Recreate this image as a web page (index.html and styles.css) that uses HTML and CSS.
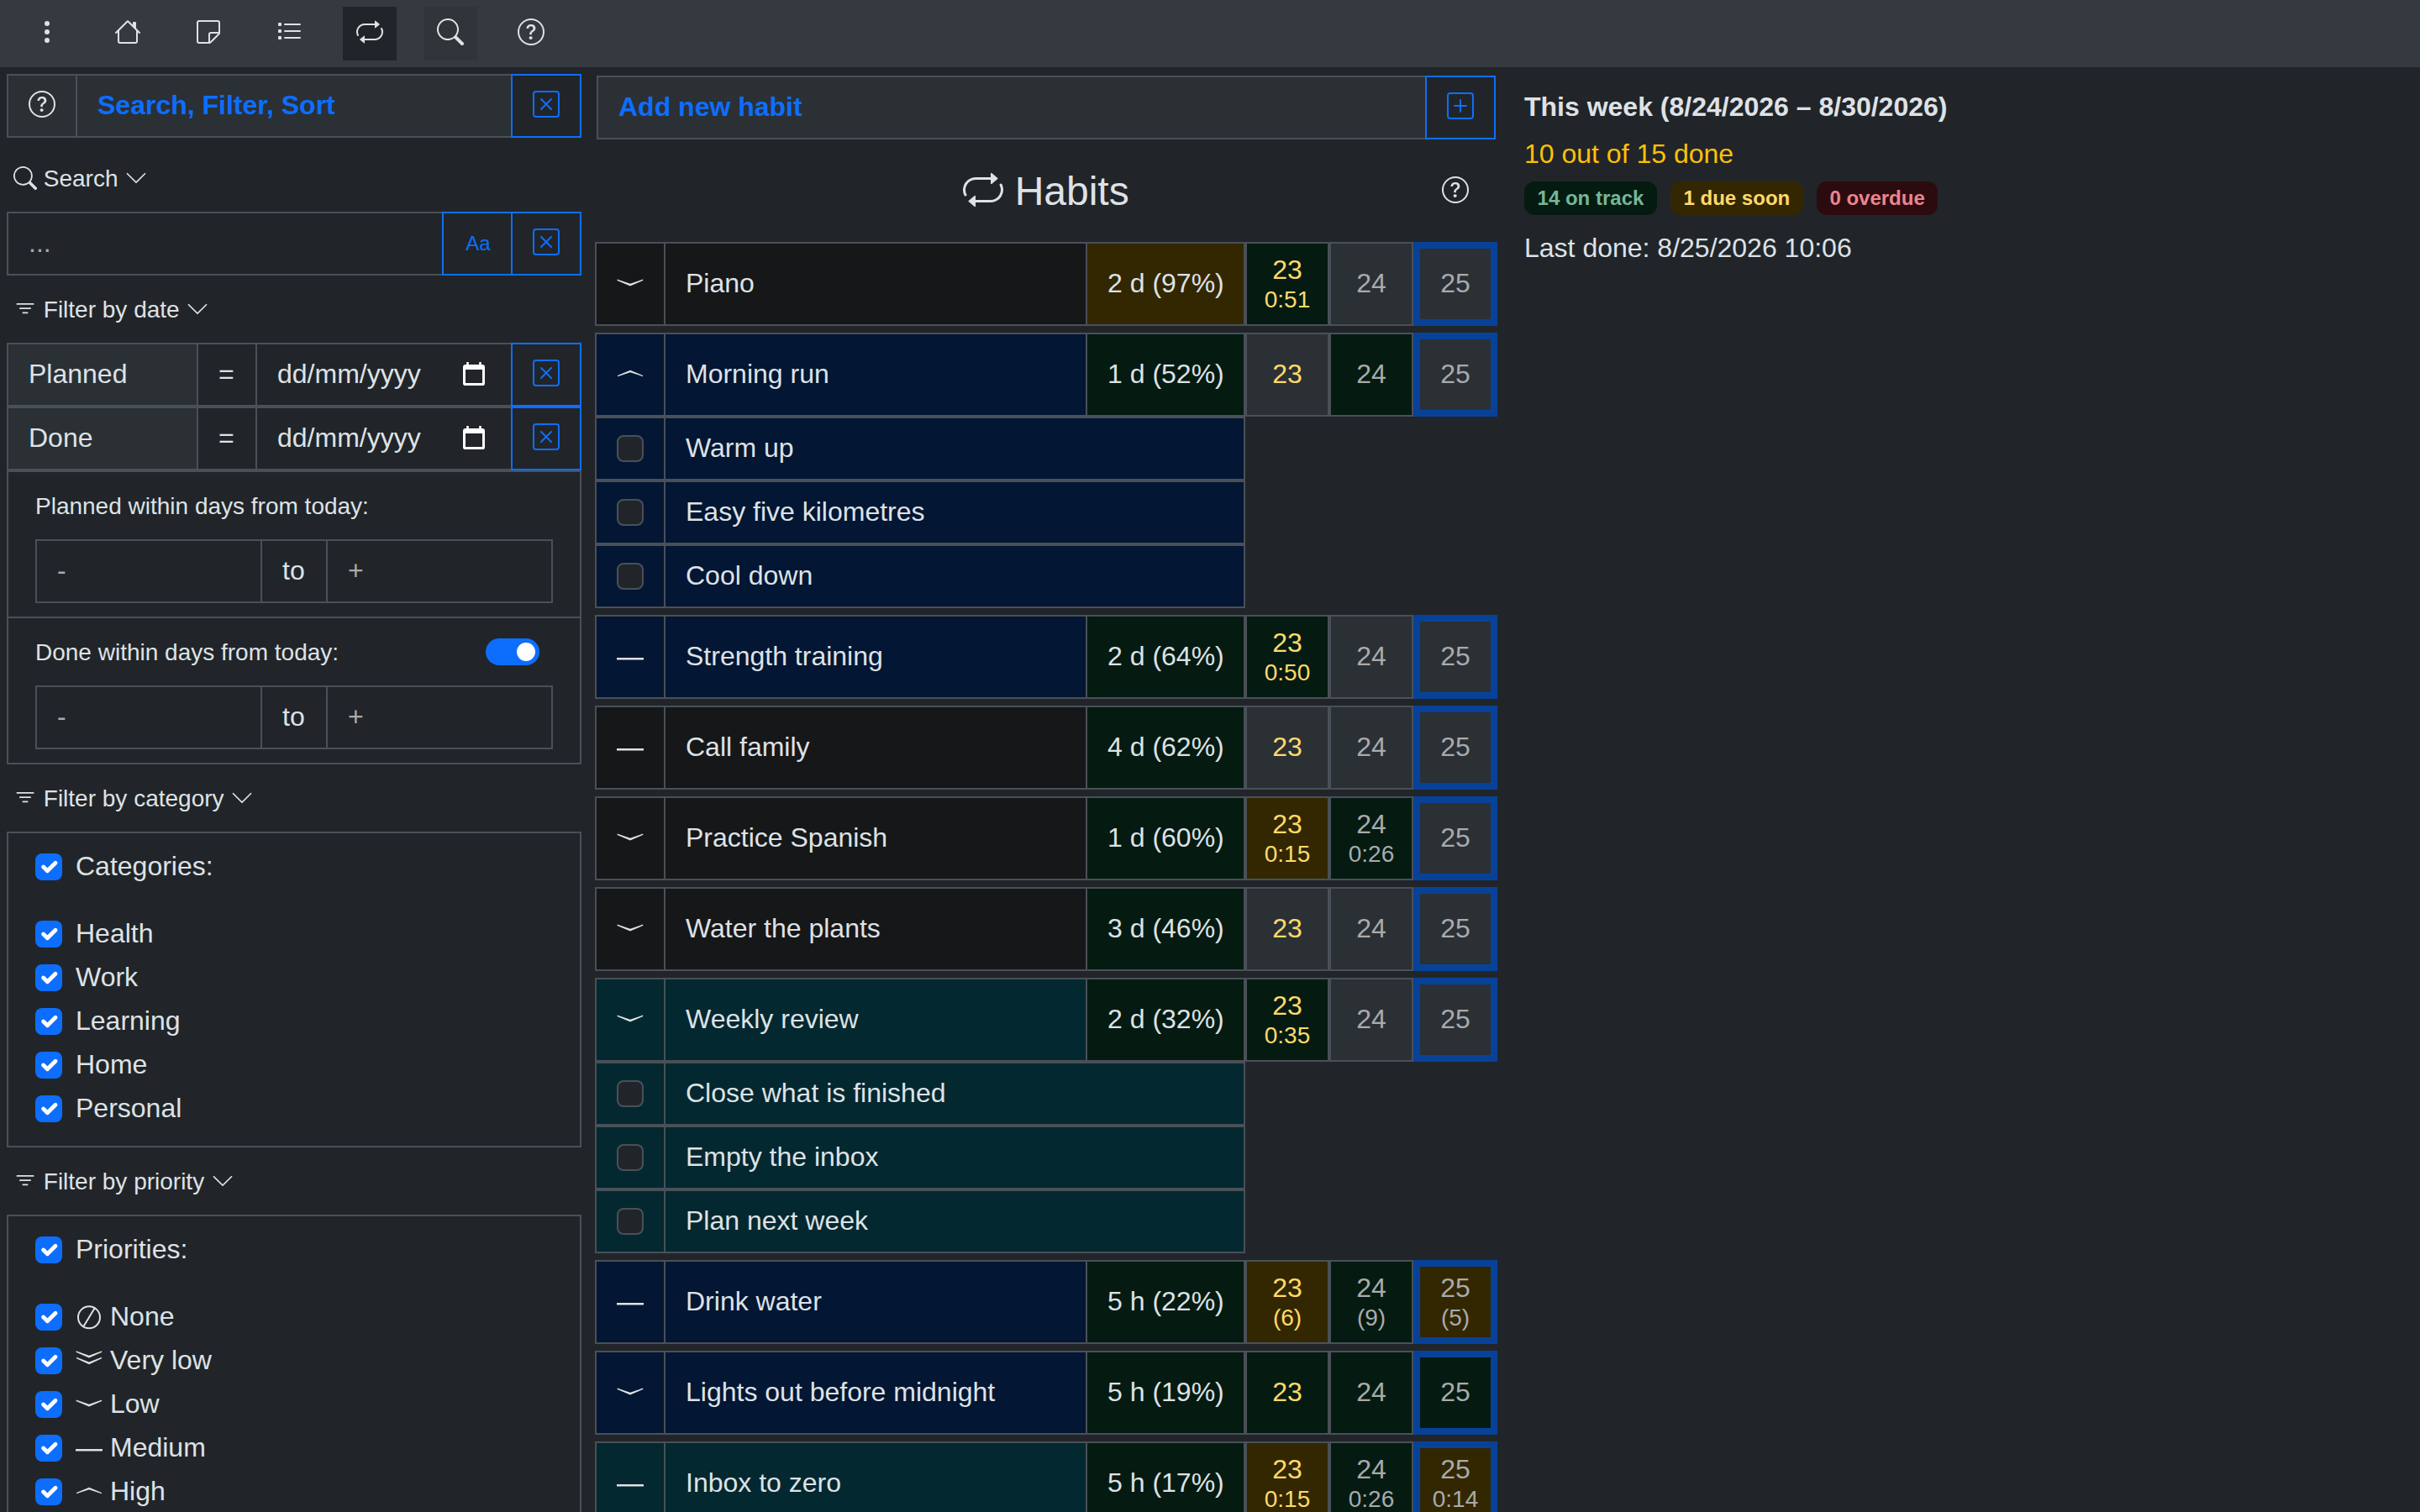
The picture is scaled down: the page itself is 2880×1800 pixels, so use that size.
FILE: index.html
```html
<!DOCTYPE html>
<html lang="en">
<head>
<meta charset="utf-8">
<title>Habits</title>
<link rel="stylesheet" href="styles.css">
</head>
<body>
<svg class="sprite" aria-hidden="true">
  <symbol id="dots" viewBox="0 0 16 16"><path d="M9.5 13a1.5 1.5 0 1 1-3 0 1.5 1.5 0 0 1 3 0m0-5a1.5 1.5 0 1 1-3 0 1.5 1.5 0 0 1 3 0m0-5a1.5 1.5 0 1 1-3 0 1.5 1.5 0 0 1 3 0"/></symbol>
  <symbol id="house" viewBox="0 0 16 16"><path d="M8.707 1.5a1 1 0 0 0-1.414 0L.646 8.146a.5.5 0 0 0 .708.708L2 8.207V13.5A1.5 1.5 0 0 0 3.5 15h9a1.5 1.5 0 0 0 1.5-1.5V8.207l.646.647a.5.5 0 0 0 .708-.708L13 5.793V2.5a.5.5 0 0 0-.5-.5h-1a.5.5 0 0 0-.5.5v1.293zM13 7.207V13.5a.5.5 0 0 1-.5.5h-9a.5.5 0 0 1-.5-.5V7.207l5-5z"/></symbol>
  <symbol id="sticky" viewBox="0 0 16 16"><path d="M2.5 1A1.5 1.5 0 0 0 1 2.5v11A1.5 1.5 0 0 0 2.5 15h6.086a1.5 1.5 0 0 0 1.06-.44l4.915-4.914A1.5 1.5 0 0 0 15 8.586V2.5A1.5 1.5 0 0 0 13.5 1zM2 2.5a.5.5 0 0 1 .5-.5h11a.5.5 0 0 1 .5.5V8H9.5A1.5 1.5 0 0 0 8 9.5V14H2.5a.5.5 0 0 1-.5-.5zm7 11.293V9.5a.5.5 0 0 1 .5-.5h4.293z"/></symbol>
  <symbol id="list" viewBox="0 0 16 16"><path d="M5 3.5a.5.5 0 0 1 .5-.5h9a.5.5 0 0 1 0 1h-9a.5.5 0 0 1-.5-.5M5.5 7a.5.5 0 0 0 0 1h9a.5.5 0 0 0 0-1zm0 4a.5.5 0 0 0 0 1h9a.5.5 0 0 0 0-1z"/><path d="M2 2.5h1a.5.5 0 0 1 .5.5v1a.5.5 0 0 1-.5.5H2a.5.5 0 0 1-.5-.5V3a.5.5 0 0 1 .5-.5M2 6.5h1a.5.5 0 0 1 .5.5v1a.5.5 0 0 1-.5.5H2a.5.5 0 0 1-.5-.5V7a.5.5 0 0 1 .5-.5M2 10.5h1a.5.5 0 0 1 .5.5v1a.5.5 0 0 1-.5.5H2a.5.5 0 0 1-.5-.5v-1a.5.5 0 0 1 .5-.5"/></symbol>
  <symbol id="repeat" viewBox="0 0 16 16"><path d="M11 5.466V4H5a4 4 0 0 0-3.584 5.777.5.5 0 1 1-.896.446A5 5 0 0 1 5 3h6V1.534a.25.25 0 0 1 .41-.192l2.36 1.966c.12.1.12.284 0 .384l-2.36 1.966a.25.25 0 0 1-.41-.192m3.81.086a.5.5 0 0 1 .67.225A5 5 0 0 1 11 13H5v1.466a.25.25 0 0 1-.41.192l-2.36-1.966a.25.25 0 0 1 0-.384l2.36-1.966a.25.25 0 0 1 .41.192V12h6a4 4 0 0 0 3.585-5.777.5.5 0 0 1 .225-.67Z"/></symbol>
  <symbol id="search" viewBox="0 0 16 16"><path d="M11.742 10.344a6.5 6.5 0 1 0-1.397 1.398h-.001q.044.06.098.115l3.85 3.85a1 1 0 0 0 1.415-1.414l-3.85-3.85a1 1 0 0 0-.115-.1zM12 6.5a5.5 5.5 0 1 1-11 0 5.5 5.5 0 0 1 11 0"/></symbol>
  <symbol id="help" viewBox="0 0 16 16"><path d="M8 15A7 7 0 1 1 8 1a7 7 0 0 1 0 14m0 1A8 8 0 1 0 8 0a8 8 0 0 0 0 16"/><path d="M5.255 5.786a.237.237 0 0 0 .241.247h.825c.138 0 .248-.113.266-.25.09-.656.54-1.134 1.342-1.134.686 0 1.314.343 1.314 1.168 0 .635-.374.927-.965 1.371-.673.489-1.206 1.06-1.168 1.987l.003.217a.25.25 0 0 0 .25.246h.811a.25.25 0 0 0 .25-.25v-.105c0-.718.273-.927 1.01-1.486.609-.463 1.244-.977 1.244-2.056 0-1.511-1.276-2.241-2.673-2.241-1.267 0-2.655.59-2.75 2.286m1.557 5.763c0 .533.425.927 1.01.927.609 0 1.028-.394 1.028-.927 0-.552-.42-.94-1.029-.94-.584 0-1.009.388-1.009.94"/></symbol>
  <symbol id="xsquare" viewBox="0 0 16 16"><path d="M14 1a1 1 0 0 1 1 1v12a1 1 0 0 1-1 1H2a1 1 0 0 1-1-1V2a1 1 0 0 1 1-1zM2 0a2 2 0 0 0-2 2v12a2 2 0 0 0 2 2h12a2 2 0 0 0 2-2V2a2 2 0 0 0-2-2z"/><path d="M4.646 4.646a.5.5 0 0 1 .708 0L8 7.293l2.646-2.647a.5.5 0 0 1 .708.708L8.707 8l2.647 2.646a.5.5 0 0 1-.708.708L8 8.707l-2.646 2.647a.5.5 0 0 1-.708-.708L7.293 8 4.646 5.354a.5.5 0 0 1 0-.708"/></symbol>
  <symbol id="plussquare" viewBox="0 0 16 16"><path d="M14 1a1 1 0 0 1 1 1v12a1 1 0 0 1-1 1H2a1 1 0 0 1-1-1V2a1 1 0 0 1 1-1zM2 0a2 2 0 0 0-2 2v12a2 2 0 0 0 2 2h12a2 2 0 0 0 2-2V2a2 2 0 0 0-2-2z"/><path d="M8 4a.5.5 0 0 1 .5.5v3h3a.5.5 0 0 1 0 1h-3v3a.5.5 0 0 1-1 0v-3h-3a.5.5 0 0 1 0-1h3v-3A.5.5 0 0 1 8 4"/></symbol>
  <symbol id="chevron" viewBox="0 0 16 16"><path d="M1.646 4.646a.5.5 0 0 1 .708 0L8 10.293l5.646-5.647a.5.5 0 0 1 .708.708l-6 6a.5.5 0 0 1-.708 0l-6-6a.5.5 0 0 1 0-.708"/></symbol>
  <symbol id="filter" viewBox="0 0 16 16"><path d="M6 10.5a.5.5 0 0 1 .5-.5h3a.5.5 0 0 1 0 1h-3a.5.5 0 0 1-.5-.5m-2-3a.5.5 0 0 1 .5-.5h7a.5.5 0 0 1 0 1h-7a.5.5 0 0 1-.5-.5m-2-3a.5.5 0 0 1 .5-.5h11a.5.5 0 0 1 0 1h-11a.5.5 0 0 1-.5-.5"/></symbol>
  <symbol id="calendar" viewBox="0 0 26 28"><path fill-rule="evenodd" d="M4.2 0h2.6v3h12.4V0h2.6v3H23a3 3 0 0 1 3 3v19.300a3 3 0 0 1-3 3H3a3 3 0 0 1-3-3V6a3 3 0 0 1 3-3h1.200zM3 9v16h20V9z"/></symbol>
  <symbol id="tick" viewBox="0 0 20 20"><path fill="none" stroke="#fff" stroke-linecap="round" stroke-linejoin="round" stroke-width="3" d="m6 10 3 3 6-6"/></symbol>
  <symbol id="none" viewBox="0 0 32 32"><path fill="none" stroke="currentColor" stroke-width="2" d="M29 16.300a13 13 0 1 1-26 0a13 13 0 1 1 26 0M9.300 27.300 22.700 5.300"/></symbol>
  <symbol id="verylow" viewBox="0 0 32 32"><path d="M.6 4.300 16 9.700 31.200 4.300v1.500L16 12.500.6 5.800zM1 11.800l15 5.600L31 11.800v1.500l-15 7-15-7z"/></symbol>
  <symbol id="low" viewBox="0 0 32 32"><path d="M.6 10.500 16 15.700 31.200 10.500v1.400L16 18.400.6 11.900z"/></symbol>
  <symbol id="medium" viewBox="0 0 32 32"><path d="M-.5 17h33v2.400h-33z"/></symbol>
  <symbol id="high" viewBox="0 0 32 32"><path d="M1 18.200 16 13.200l15 5V16.900L16 10.700 1 16.900z"/></symbol>
</svg>

<nav class="toolbar">
  <a class="tool"><svg class="icon"><use href="#dots"/></svg></a>
  <a class="tool"><svg class="icon"><use href="#house"/></svg></a>
  <a class="tool"><svg class="icon"><use href="#sticky"/></svg></a>
  <a class="tool"><svg class="icon"><use href="#list"/></svg></a>
  <a class="tool tool-active"><svg class="icon"><use href="#repeat"/></svg></a>
  <a class="tool tool-on"><svg class="icon"><use href="#search"/></svg></a>
  <a class="tool"><svg class="icon"><use href="#help"/></svg></a>
</nav>

<div class="layout">
  <aside class="sidebar">
    <div class="group">
      <div class="cell square raised"><svg class="icon"><use href="#help"/></svg></div>
      <div class="cell grow raised title">Search, Filter, Sort</div>
      <div class="cell square primary"><svg class="icon"><use href="#xsquare"/></svg></div>
    </div>

    <h3 class="section first"><svg class="icon-sm"><use href="#search"/></svg> Search <svg class="icon-sm"><use href="#chevron"/></svg></h3>
    <div class="group">
      <div class="cell grow muted">...</div>
      <div class="cell square primary case">Aa</div>
      <div class="cell square primary"><svg class="icon"><use href="#xsquare"/></svg></div>
    </div>

    <h3 class="section"><svg class="icon-sm"><use href="#filter"/></svg> Filter by date <svg class="icon-sm"><use href="#chevron"/></svg></h3>
    <div class="group">
      <div class="cell label raised">Planned</div>
      <div class="cell op">=</div>
      <div class="cell grow date">dd/mm/yyyy <svg class="calendar"><use href="#calendar"/></svg></div>
      <div class="cell square primary"><svg class="icon"><use href="#xsquare"/></svg></div>
    </div>
    <div class="group">
      <div class="cell label raised">Done</div>
      <div class="cell op">=</div>
      <div class="cell grow date">dd/mm/yyyy <svg class="calendar"><use href="#calendar"/></svg></div>
      <div class="cell square primary"><svg class="icon"><use href="#xsquare"/></svg></div>
    </div>
    <div class="box">
      <div class="range">
        <div class="range-head"><span>Planned within days from today:</span></div>
        <div class="group">
          <div class="cell from muted">-</div>
          <div class="cell to">to</div>
          <div class="cell grow muted">+</div>
        </div>
      </div>
      <div class="range">
        <div class="range-head"><span>Done within days from today:</span><span class="switch"></span></div>
        <div class="group">
          <div class="cell from muted">-</div>
          <div class="cell to">to</div>
          <div class="cell grow muted">+</div>
        </div>
      </div>
    </div>

    <h3 class="section"><svg class="icon-sm"><use href="#filter"/></svg> Filter by category <svg class="icon-sm"><use href="#chevron"/></svg></h3>
    <div class="box checks">
      <label class="check check-all"><svg class="tick"><use href="#tick"/></svg>Categories:</label>
      <label class="check"><svg class="tick"><use href="#tick"/></svg>Health</label>
      <label class="check"><svg class="tick"><use href="#tick"/></svg>Work</label>
      <label class="check"><svg class="tick"><use href="#tick"/></svg>Learning</label>
      <label class="check"><svg class="tick"><use href="#tick"/></svg>Home</label>
      <label class="check"><svg class="tick"><use href="#tick"/></svg>Personal</label>
    </div>

    <h3 class="section"><svg class="icon-sm"><use href="#filter"/></svg> Filter by priority <svg class="icon-sm"><use href="#chevron"/></svg></h3>
    <div class="box checks">
      <label class="check check-all"><svg class="tick"><use href="#tick"/></svg>Priorities:</label>
      <label class="check"><svg class="tick"><use href="#tick"/></svg><svg class="prio"><use href="#none"/></svg>None</label>
      <label class="check"><svg class="tick"><use href="#tick"/></svg><svg class="prio"><use href="#verylow"/></svg>Very low</label>
      <label class="check"><svg class="tick"><use href="#tick"/></svg><svg class="prio"><use href="#low"/></svg>Low</label>
      <label class="check"><svg class="tick"><use href="#tick"/></svg><svg class="prio"><use href="#medium"/></svg>Medium</label>
      <label class="check"><svg class="tick"><use href="#tick"/></svg><svg class="prio"><use href="#high"/></svg>High</label>
    </div>
  </aside>

  <main class="main">
    <div class="group add">
      <div class="cell grow raised title">Add new habit</div>
      <div class="cell square primary"><svg class="icon"><use href="#plussquare"/></svg></div>
    </div>
    <header class="heading">
      <h1><svg class="icon-lg"><use href="#repeat"/></svg> Habits</h1>
      <svg class="icon help"><use href="#help"/></svg>
    </header>

    <div class="habits">
      <section class="habit plain">
        <div class="row">
          <div class="cell square"><svg class="mark"><use href="#low"/></svg></div>
          <div class="cell grow">Piano</div>
          <div class="cell ratio soon">2 d (97%)</div>
          <div class="day weekend ok two">23<small>0:51</small></div>
          <div class="day">24</div>
          <div class="day today">25</div>
        </div>
      </section>
      <section class="habit navy">
        <div class="row">
          <div class="cell square"><svg class="mark"><use href="#high"/></svg></div>
          <div class="cell grow">Morning run</div>
          <div class="cell ratio ok">1 d (52%)</div>
          <div class="day weekend">23</div>
          <div class="day ok">24</div>
          <div class="day today">25</div>
        </div>
        <div class="sub"><div class="cell square"><i class="box-empty"></i></div><div class="cell grow">Warm up</div></div>
        <div class="sub"><div class="cell square"><i class="box-empty"></i></div><div class="cell grow">Easy five kilometres</div></div>
        <div class="sub"><div class="cell square"><i class="box-empty"></i></div><div class="cell grow">Cool down</div></div>
      </section>
      <section class="habit navy">
        <div class="row">
          <div class="cell square"><svg class="mark"><use href="#medium"/></svg></div>
          <div class="cell grow">Strength training</div>
          <div class="cell ratio ok">2 d (64%)</div>
          <div class="day weekend ok two">23<small>0:50</small></div>
          <div class="day">24</div>
          <div class="day today">25</div>
        </div>
      </section>
      <section class="habit plain">
        <div class="row">
          <div class="cell square"><svg class="mark"><use href="#medium"/></svg></div>
          <div class="cell grow">Call family</div>
          <div class="cell ratio ok">4 d (62%)</div>
          <div class="day weekend">23</div>
          <div class="day">24</div>
          <div class="day today">25</div>
        </div>
      </section>
      <section class="habit plain">
        <div class="row">
          <div class="cell square"><svg class="mark"><use href="#low"/></svg></div>
          <div class="cell grow">Practice Spanish</div>
          <div class="cell ratio ok">1 d (60%)</div>
          <div class="day weekend soon two">23<small>0:15</small></div>
          <div class="day ok two">24<small>0:26</small></div>
          <div class="day today">25</div>
        </div>
      </section>
      <section class="habit plain">
        <div class="row">
          <div class="cell square"><svg class="mark"><use href="#low"/></svg></div>
          <div class="cell grow">Water the plants</div>
          <div class="cell ratio ok">3 d (46%)</div>
          <div class="day weekend">23</div>
          <div class="day">24</div>
          <div class="day today">25</div>
        </div>
      </section>
      <section class="habit teal">
        <div class="row">
          <div class="cell square"><svg class="mark"><use href="#low"/></svg></div>
          <div class="cell grow">Weekly review</div>
          <div class="cell ratio ok">2 d (32%)</div>
          <div class="day weekend ok two">23<small>0:35</small></div>
          <div class="day">24</div>
          <div class="day today">25</div>
        </div>
        <div class="sub"><div class="cell square"><i class="box-empty"></i></div><div class="cell grow">Close what is finished</div></div>
        <div class="sub"><div class="cell square"><i class="box-empty"></i></div><div class="cell grow">Empty the inbox</div></div>
        <div class="sub"><div class="cell square"><i class="box-empty"></i></div><div class="cell grow">Plan next week</div></div>
      </section>
      <section class="habit navy">
        <div class="row">
          <div class="cell square"><svg class="mark"><use href="#medium"/></svg></div>
          <div class="cell grow">Drink water</div>
          <div class="cell ratio ok">5 h (22%)</div>
          <div class="day weekend soon two">23<small>(6)</small></div>
          <div class="day ok two">24<small>(9)</small></div>
          <div class="day soon today two">25<small>(5)</small></div>
        </div>
      </section>
      <section class="habit navy">
        <div class="row">
          <div class="cell square"><svg class="mark"><use href="#low"/></svg></div>
          <div class="cell grow">Lights out before midnight</div>
          <div class="cell ratio ok">5 h (19%)</div>
          <div class="day weekend ok">23</div>
          <div class="day ok">24</div>
          <div class="day ok today">25</div>
        </div>
      </section>
      <section class="habit teal">
        <div class="row">
          <div class="cell square"><svg class="mark"><use href="#medium"/></svg></div>
          <div class="cell grow">Inbox to zero</div>
          <div class="cell ratio ok">5 h (17%)</div>
          <div class="day weekend soon two">23<small>0:15</small></div>
          <div class="day ok two">24<small>0:26</small></div>
          <div class="day soon today two">25<small>0:14</small></div>
        </div>
      </section>
    </div>
  </main>

  <section class="summary">
    <div class="week">This week (8/24/2026 – 8/30/2026)</div>
    <div class="progress">10 out of 15 done</div>
    <div class="badges">
      <span class="badge badge-ok">14 on track</span>
      <span class="badge badge-soon">1 due soon</span>
      <span class="badge badge-late">0 overdue</span>
    </div>
    <div class="last">Last done: 8/25/2026 10:06</div>
  </section>
</div>
</body>
</html>
```
FILE: styles.css
```css
* {
  box-sizing: border-box;
}

:root {
  --bg: #212529;
  --raised: #2b3035;
  --line: #495057;
  --text: #dee2e6;
  --muted: #a7abae;
  --blue: #0d6efd;
  --ok: #051b11;
  --soon: #332701;
}

body {
  margin: 0;
  height: 1800px;
  overflow: hidden;
  background: var(--bg);
  color: var(--text);
  font: 32px/48px "Liberation Sans", Arial, sans-serif;
}

svg {
  fill: currentColor;
  flex: none;
}

.sprite {
  display: none;
}

.icon {
  width: 32px;
  height: 32px;
  margin-bottom: 2px;
}

/* toolbar */
.toolbar {
  display: flex;
  align-items: center;
  gap: 32px;
  height: 80px;
  padding-left: 24px;
  background: #343a40;
}

.tool {
  display: flex;
  align-items: center;
  justify-content: center;
  width: 64px;
  height: 64px;
  padding-bottom: 2px;
}

.tool-active {
  background: #212529;
}

.tool-on {
  background: #303539;
}

/* columns */
.layout {
  display: flex;
  align-items: flex-start;
  padding-left: 8px;
}

.sidebar {
  width: 684px;
  padding-top: 8px;
}

.main {
  width: 1074px;
  margin-left: 16px;
  padding-top: 10px;
}

.summary {
  margin-left: 32px;
  padding-top: 23px;
  white-space: nowrap;
}

/* joined cells */
.group,
.row,
.sub {
  display: flex;
}

.group,
.sub {
  height: 76px;
}

.cell {
  display: flex;
  align-items: center;
  border: 2px solid var(--line);
  padding: 0 24px 2px;
  white-space: nowrap;
}

.cell + .cell {
  margin-left: -2px;
}

.grow {
  flex: 1;
}

.square {
  width: 84px;
  flex: none;
  justify-content: center;
}

.raised {
  background: var(--raised);
}

.primary {
  border-color: var(--blue);
  color: var(--blue);
}

.title {
  color: var(--blue);
  font-weight: bold;
}

.muted {
  color: var(--muted);
}

.case {
  font-size: 24px;
  line-height: 27px;
  padding: 0 23px 1px 25px;
}

.label {
  width: 228px;
}

.op {
  width: 72px;
}

.date {
  justify-content: space-between;
  padding-right: 31px;
}

.calendar {
  width: 26px;
  height: 28px;
  color: #fff;
}

/* sidebar */
.section {
  margin: 20px 0 19px;
  padding-left: 8px;
  font-size: 28px;
  font-weight: normal;
  line-height: 41px;
  height: 41px;
}

.first {
  margin-top: 28px;
}

.icon-sm {
  width: 28px;
  height: 28px;
  vertical-align: -4px;
}

.box {
  border: 2px solid var(--line);
}

.range {
  padding: 20px 32px 16px;
}

.range + .range {
  border-top: 2px solid var(--line);
}

.range-head {
  display: flex;
  justify-content: space-between;
  align-items: center;
  height: 41px;
  margin-bottom: 19px;
  padding-right: 16px;
  font-size: 28px;
  line-height: 41px;
}

.switch {
  display: flex;
  align-items: center;
  justify-content: flex-end;
  width: 64px;
  height: 32px;
  margin-bottom: 1px;
  padding-right: 5px;
  border-radius: 16px;
  background: var(--blue);
}

.switch::after {
  content: "";
  width: 22px;
  height: 22px;
  border-radius: 50%;
  background: #fff;
}

.from {
  width: 270px;
}

.to {
  width: 80px;
}

.checks {
  padding: 16px 32px;
}

.check {
  display: flex;
  align-items: center;
  height: 48px;
  margin-bottom: 4px;
  line-height: 46px;
  padding-bottom: 2px;
}

.check-all {
  margin-bottom: 32px;
}

.tick {
  width: 32px;
  height: 32px;
  margin: 2px 16px 0 0;
  border-radius: 8px;
  background: var(--blue);
}

.prio {
  width: 32px;
  height: 32px;
  margin: 2px 9px 0 0;
  overflow: visible;
}

/* habits */
.add {
  margin: 0 2px;
}

.heading {
  display: grid;
  grid-template-columns: 1fr auto;
  height: 122px;
  align-items: start;
}

.heading h1 {
  grid-area: 1 / 1 / 2 / 3;
  margin: 33px 0 0;
  font-size: 48px;
  font-weight: normal;
  line-height: 57px;
  text-align: center;
}

.icon-lg {
  width: 48px;
  height: 48px;
  vertical-align: -6px;
}

.help {
  grid-area: 1 / 2;
  margin: 44px 34px 0 0;
}

.habits {
  display: flex;
  flex-direction: column;
  gap: 8px;
}

.row {
  height: 100px;
}

.sub {
  width: 774px;
}

.mark {
  width: 32px;
  height: 32px;
  margin-top: 2px;
  overflow: visible;
}

.plain .cell {
  background: #161719;
}

.navy .cell {
  background: #031633;
}

.teal .cell {
  background: #032830;
}

.ratio {
  width: 190px;
}

.box-empty {
  width: 32px;
  height: 32px;
  margin-top: 2px;
  border: 2px solid var(--line);
  border-radius: 8px;
  background: var(--bg);
}

.day {
  display: flex;
  flex-direction: column;
  align-items: center;
  flex: none;
  width: 100px;
  height: 100px;
  padding-top: 31px;
  background: var(--raised);
  box-shadow: inset 0 0 0 2px var(--line);
  color: var(--muted);
  line-height: 36px;
}

.two {
  padding-top: 15px;
}

.day small {
  margin-top: 2px;
  font-size: 28px;
  line-height: 31px;
}

.weekend {
  color: #ffda6a;
}

.today {
  box-shadow: inset 0 0 0 8px #084298;
}

.habit .ok {
  background: var(--ok);
}

.habit .soon {
  background: var(--soon);
}

/* summary */
.week {
  font-weight: bold;
  margin-bottom: 8px;
}

.progress {
  color: #ffc107;
  margin-bottom: 9px;
}

.badges {
  display: flex;
  gap: 16px;
  margin-bottom: 15px;
}

.badge {
  height: 40px;
  padding: 6px 15.6px 7px;
  border-radius: 12px;
  font-size: 24px;
  font-weight: bold;
  line-height: 27px;
}

.badge-ok {
  background: var(--ok);
  color: #75b798;
}

.badge-soon {
  background: var(--soon);
  color: #ffda6a;
}

.badge-late {
  background: #2c0b0e;
  color: #ea868f;
}
```
